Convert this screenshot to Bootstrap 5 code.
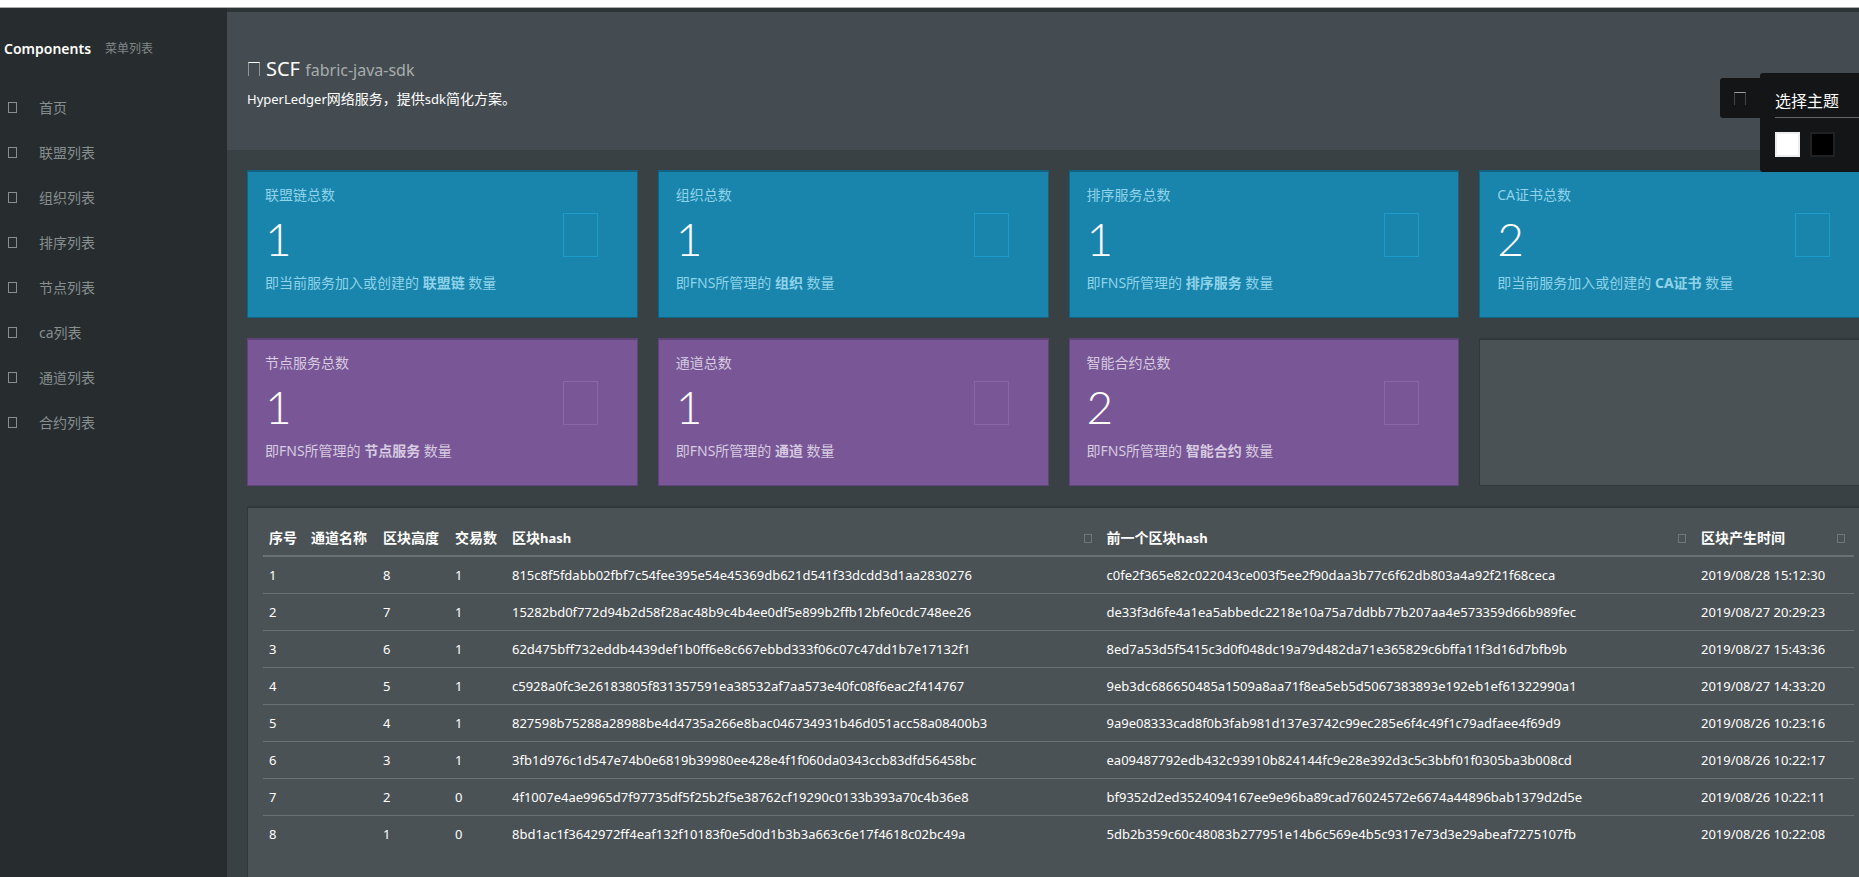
<!DOCTYPE html>
<html lang="zh-CN">
<head>
<meta charset="utf-8">
<meta name="viewport" content="width=device-width, initial-scale=1">
<title>SCF fabric-java-sdk</title>
<link href="https://cdn.jsdelivr.net/npm/bootstrap@5.3.0/dist/css/bootstrap.min.css" rel="stylesheet">
<style>
  body { font-family: "Noto Sans", "Noto Sans CJK SC", sans-serif; font-size: 14px; line-height: 20px; background: #3a4144; color: #fff; overflow: hidden; }
  .latin { font-size: 13px; }
  .topline { height: 8px; background: #fff; border-bottom: 1px solid #a9adae; }
  .shell { height: calc(100vh - 8px); }
  .sidebar { width: 227px; background: #272c2e; }
  .brand { padding: 31px 4px 0; margin-bottom: 26px; gap: 14px; }
  .brand h1 { font-size: 14px; line-height: 20px; font-weight: 600; }
  .brand small { font-size: 12px; color: #7f8788; }
  .sidebar .nav-link { padding: 0 8px; height: 45px; gap: 22px; color: #868e8e; }
  .sidebar .nav-link:hover { color: #fff; }
  .glyph { display: inline-block; flex: none; border: 1px solid currentColor; width: 9px; height: 11px; }
  /* the content area runs past the right edge of the window */
  .content { width: calc(100% - 196px); border-top: 4px solid #2d3436; }
  .masthead { height: 138px; padding: 44px 20px 0; background: #444c51; }
  .masthead h2 { font-size: 20px; line-height: 26px; margin-bottom: 6px; }
  .masthead h2 small { font-size: 16px; color: #a8acae; }
  .masthead .glyph { width: 12px; height: 14px; border-bottom: 0; border-color: #fff #8f9698; margin: 0 6px 0 1px; }
  .board { padding: 20px; }
  .tiles { --bs-gutter-x: 20px; --bs-gutter-y: 20px; margin: 0 -10px 20px; }
  .tiles > .col:nth-child(-n+4) { margin-top: 0; }
  .tile { height: 148px; padding: 13px 17px; border: 1px solid; border-top-width: 2px; position: relative; }
  .tile-blue { background: #1985ac; border-color: #12637f; color: #8fd3ea; --tile-icon: #1e9bc8; }
  .tile-purple { background: #795796; border-color: #5e4478; color: #d6cbe0; --tile-icon: #8968a7; }
  .tile-plain, .panel { background: #4b5255; border-color: #32383a; }
  .tile .figure-num { font-family: Lato, "Open Sans", sans-serif; font-weight: 300; font-size: 46px; line-height: 68px; color: #fff; }
  .tile .glyph { position: absolute; right: 39px; top: 41px; width: 35px; height: 44px; color: var(--tile-icon); }
  .panel { border: 1px solid #32383a; border-top-width: 2px; padding: 15px; min-height: 400px; }
  .blocks { --bs-table-color: #fff; --bs-table-bg: transparent; table-layout: fixed; color: #fff; }
  .blocks > :not(caption) > * > * { padding: 8px 6px; border-bottom: 0; white-space: nowrap; }
  .blocks thead th { padding: 5px 6px 7px; border-bottom: 2px solid #697173; line-height: 20px; }
  .blocks tbody td { font-size: 13px; border-top: 1px solid #697173; }
  .blocks tbody tr:first-child td { border-top: 0; }
  .blocks .glyph { width: 8px; height: 9px; color: #6f7779; margin-right: 3px; }
  .c-no { width: 42px; } .c-name { width: 72px; } .c-tx { width: 57px; } .c-time { width: 159px; }
  .theme { top: 73px; right: 0; z-index: 10; }
  .theme-tab { width: 40px; height: 40px; margin-top: 5px; background: #131516; border: 0; border-radius: 3px 0 0 3px; padding: 0; }
  .theme-tab .glyph { width: 12px; height: 13px; border: 1px solid #424545; border-top-color: #9b9d9e; border-bottom: 0; }
  .theme-box { width: 99px; height: 99px; background: #131516; border-radius: 3px 0 0 3px; padding: 15px 0 0 15px; }
  .theme-box h3 { font-size: 16px; line-height: 26px; height: 30px; border-bottom: 1px solid #626465; margin-bottom: 14px; }
  .swatches { gap: 10px; }
  .swatch { width: 25px; height: 25px; padding: 0; border: 2px solid #ededed; background: #fff; }
  .swatch-dark { border-color: #202122; background: #000; }
</style>
</head>
<body>
<div class="topline"></div>
<div class="shell d-flex">
  <aside class="sidebar flex-shrink-0">
    <div class="brand d-flex align-items-center">
      <h1 class="m-0">Components</h1><small>菜单列表</small>
    </div>
    <nav class="nav flex-column">
      <a class="nav-link d-flex align-items-center" href="#"><i class="glyph"></i>首页</a>
      <a class="nav-link d-flex align-items-center" href="#"><i class="glyph"></i>联盟列表</a>
      <a class="nav-link d-flex align-items-center" href="#"><i class="glyph"></i>组织列表</a>
      <a class="nav-link d-flex align-items-center" href="#"><i class="glyph"></i>排序列表</a>
      <a class="nav-link d-flex align-items-center" href="#"><i class="glyph"></i>节点列表</a>
      <a class="nav-link d-flex align-items-center" href="#"><i class="glyph"></i>ca列表</a>
      <a class="nav-link d-flex align-items-center" href="#"><i class="glyph"></i>通道列表</a>
      <a class="nav-link d-flex align-items-center" href="#"><i class="glyph"></i>合约列表</a>
    </nav>
  </aside>

  <main class="content flex-shrink-0">
    <header class="masthead">
      <h2 class="fw-normal"><i class="glyph"></i>SCF <small>fabric-java-sdk</small></h2>
      <p class="m-0"><span class="latin">HyperLedger</span>网络服务，提供<span class="latin">sdk</span>简化方案。</p>
    </header>

    <div class="board">
      <div class="row row-cols-4 tiles">
        <div class="col"><section class="tile tile-blue"><div>联盟链总数</div><div class="figure-num">1</div><div>即当前服务加入或创建的 <b>联盟链</b> 数量</div><i class="glyph"></i></section></div>
        <div class="col"><section class="tile tile-blue"><div>组织总数</div><div class="figure-num">1</div><div>即FNS所管理的 <b>组织</b> 数量</div><i class="glyph"></i></section></div>
        <div class="col"><section class="tile tile-blue"><div>排序服务总数</div><div class="figure-num">1</div><div>即FNS所管理的 <b>排序服务</b> 数量</div><i class="glyph"></i></section></div>
        <div class="col"><section class="tile tile-blue"><div>CA证书总数</div><div class="figure-num">2</div><div>即当前服务加入或创建的 <b>CA证书</b> 数量</div><i class="glyph"></i></section></div>
        <div class="col"><section class="tile tile-purple"><div>节点服务总数</div><div class="figure-num">1</div><div>即FNS所管理的 <b>节点服务</b> 数量</div><i class="glyph"></i></section></div>
        <div class="col"><section class="tile tile-purple"><div>通道总数</div><div class="figure-num">1</div><div>即FNS所管理的 <b>通道</b> 数量</div><i class="glyph"></i></section></div>
        <div class="col"><section class="tile tile-purple"><div>智能合约总数</div><div class="figure-num">2</div><div>即FNS所管理的 <b>智能合约</b> 数量</div><i class="glyph"></i></section></div>
        <div class="col"><section class="tile tile-plain"></section></div>
      </div>

      <section class="panel">
        <table class="table blocks m-0">
          <colgroup><col class="c-no"><col class="c-name"><col class="c-name"><col class="c-tx"><col><col><col class="c-time"></colgroup>
          <thead>
            <tr>
              <th>序号</th><th>通道名称</th><th>区块高度</th><th>交易数</th>
              <th><div class="d-flex justify-content-between align-items-center"><span>区块<span class="latin">hash</span></span><i class="glyph"></i></div></th>
              <th><div class="d-flex justify-content-between align-items-center"><span>前一个区块<span class="latin">hash</span></span><i class="glyph"></i></div></th>
              <th><div class="d-flex justify-content-between align-items-center"><span>区块产生时间</span><i class="glyph"></i></div></th>
            </tr>
          </thead>
          <tbody>
            <tr><td>1</td><td></td><td>8</td><td>1</td><td>815c8f5fdabb02fbf7c54fee395e54e45369db621d541f33dcdd3d1aa2830276</td><td>c0fe2f365e82c022043ce003f5ee2f90daa3b77c6f62db803a4a92f21f68ceca</td><td>2019/08/28 15:12:30</td></tr>
            <tr><td>2</td><td></td><td>7</td><td>1</td><td>15282bd0f772d94b2d58f28ac48b9c4b4ee0df5e899b2ffb12bfe0cdc748ee26</td><td>de33f3d6fe4a1ea5abbedc2218e10a75a7ddbb77b207aa4e573359d66b989fec</td><td>2019/08/27 20:29:23</td></tr>
            <tr><td>3</td><td></td><td>6</td><td>1</td><td>62d475bff732eddb4439def1b0ff6e8c667ebbd333f06c07c47dd1b7e17132f1</td><td>8ed7a53d5f5415c3d0f048dc19a79d482da71e365829c6bffa11f3d16d7bfb9b</td><td>2019/08/27 15:43:36</td></tr>
            <tr><td>4</td><td></td><td>5</td><td>1</td><td>c5928a0fc3e26183805f831357591ea38532af7aa573e40fc08f6eac2f414767</td><td>9eb3dc686650485a1509a8aa71f8ea5eb5d5067383893e192eb1ef61322990a1</td><td>2019/08/27 14:33:20</td></tr>
            <tr><td>5</td><td></td><td>4</td><td>1</td><td>827598b75288a28988be4d4735a266e8bac046734931b46d051acc58a08400b3</td><td>9a9e08333cad8f0b3fab981d137e3742c99ec285e6f4c49f1c79adfaee4f69d9</td><td>2019/08/26 10:23:16</td></tr>
            <tr><td>6</td><td></td><td>3</td><td>1</td><td>3fb1d976c1d547e74b0e6819b39980ee428e4f1f060da0343ccb83dfd56458bc</td><td>ea09487792edb432c93910b824144fc9e28e392d3c5c3bbf01f0305ba3b008cd</td><td>2019/08/26 10:22:17</td></tr>
            <tr><td>7</td><td></td><td>2</td><td>0</td><td>4f1007e4ae9965d7f97735df5f25b2f5e38762cf19290c0133b393a70c4b36e8</td><td>bf9352d2ed3524094167ee9e96ba89cad76024572e6674a44896bab1379d2d5e</td><td>2019/08/26 10:22:11</td></tr>
            <tr><td>8</td><td></td><td>1</td><td>0</td><td>8bd1ac1f3642972ff4eaf132f10183f0e5d0d1b3b3a663c6e17f4618c02bc49a</td><td>5db2b359c60c48083b277951e14b6c569e4b5c9317e73d3e29abeaf7275107fb</td><td>2019/08/26 10:22:08</td></tr>
          </tbody>
        </table>
      </section>
    </div>
  </main>
</div>

<div class="theme position-fixed d-flex align-items-start">
  <button class="theme-tab d-flex align-items-center justify-content-center" type="button" aria-label="主题"><i class="glyph"></i></button>
  <div class="theme-box">
    <h3 class="fw-normal">选择主题</h3>
    <div class="swatches d-flex">
      <button class="swatch" type="button" aria-label="白色"></button>
      <button class="swatch swatch-dark" type="button" aria-label="黑色"></button>
    </div>
  </div>
</div>
<script src="https://cdn.jsdelivr.net/npm/bootstrap@5.3.0/dist/js/bootstrap.bundle.min.js"></script>
</body>
</html>
